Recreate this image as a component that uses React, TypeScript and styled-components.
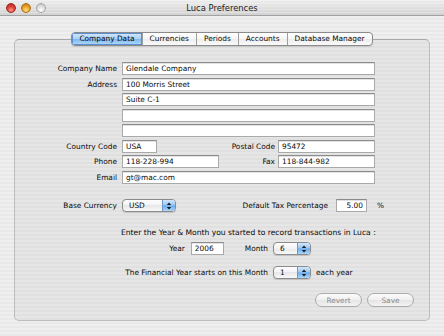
import * as React from 'react';
import styled, { createGlobalStyle } from 'styled-components';

const GlobalStyle = createGlobalStyle`
  html, body {
    margin: 0;
    padding: 0;
  }
  body {
    font-family: "DejaVu Sans", "Liberation Sans", sans-serif;
    background: #ededed;
  }
`;

const FS = '7.4px';

const Window = styled.div`
  width: 444px;
  height: 336px;
  display: flex;
  flex-direction: column;
  overflow: hidden;
  background: repeating-linear-gradient(to bottom, #efefef 0 2px, #e9e9e9 2px 4px);
`;

const TitleBar = styled.div`
  height: 15px;
  flex: none;
  display: grid;
  grid-template-columns: 1fr auto 1fr;
  align-items: center;
  border-bottom: 1px solid #a2a2a2;
  background: repeating-linear-gradient(to bottom, rgba(255,255,255,0.25) 0 1px, transparent 1px 3px),
    linear-gradient(#ededed, #d2d2d2);
`;

const Lights = styled.div`
  display: flex;
  gap: 5px;
  padding-left: 6px;
`;

const Light = styled.span<{ $kind: 'close' | 'min' | 'zoom' }>`
  width: 10px;
  height: 10px;
  border-radius: 50%;
  box-sizing: border-box;
  border: 1px solid
    ${(p) => (p.$kind === 'close' ? '#9b2a24' : p.$kind === 'min' ? '#a8701a' : '#a6a6a6')};
  background: ${(p) =>
    p.$kind === 'close'
      ? 'radial-gradient(circle at 50% 75%, #ff9a8a 0, #e2453c 45%, #a8231c 100%)'
      : p.$kind === 'min'
      ? 'radial-gradient(circle at 50% 75%, #ffe08a 0, #f0a42a 45%, #b8700c 100%)'
      : 'radial-gradient(circle at 50% 75%, #ffffff 0, #e2e2e2 45%, #bdbdbd 100%)'};
`;

const Title = styled.div`
  font-size: 8.4px;
  color: #1a1a1a;
  text-align: center;
`;

const Content = styled.div`
  flex: 1;
  padding: 16px 14px 0;
  display: flex;
  flex-direction: column;
`;

const TabRow = styled.div`
  display: flex;
  justify-content: center;
  margin-bottom: -7px;
  position: relative;
  z-index: 1;
`;

const TabBar = styled.div`
  display: flex;
  height: 14px;
  box-sizing: border-box;
  border: 1px solid #8a8a8a;
  border-radius: 4px;
  overflow: hidden;
  box-shadow: 0 1px 1px rgba(0, 0, 0, 0.12);
  background: linear-gradient(#ffffff, #f6f6f6 50%, #ececec 50%, #fafafa);
`;

const Tab = styled.div<{ $active?: boolean }>`
  padding: 0 7px;
  font-size: ${FS};
  line-height: 12px;
  color: #0a0a0a;
  white-space: nowrap;
  & + & {
    border-left: 1px solid #9d9d9d;
  }
  ${(p) =>
    p.$active &&
    `
    background: linear-gradient(#d6eafc, #a9d0f5 48%, #7fb7ee 52%, #b3dbfb);
    box-shadow: inset 0 0 0 1px #5b8fd0;
  `}
`;

const Panel = styled.div`
  border: 1px solid #bdbdbd;
  border-top-color: #a9a9a9;
  border-radius: 5px;
  background: rgba(0, 0, 0, 0.035);
  padding: 22px 15px 13px;
  display: flex;
  flex-direction: column;
`;

const FormGrid = styled.div`
  display: grid;
  grid-template-columns: 92px 97px 59px 97px 9px;
  grid-auto-rows: 13px;
  row-gap: 2.5px;
`;

const Label = styled.div<{ $col?: number; $pad?: number }>`
  grid-column: ${(p) => p.$col ?? 1};
  font-size: ${FS};
  color: #0a0a0a;
  text-align: right;
  padding-right: ${(p) => p.$pad ?? 5}px;
  white-space: nowrap;
  align-self: center;
`;

const Field = styled.div<{ $col?: string; $w?: number; $right?: boolean }>`
  grid-column: ${(p) => p.$col ?? '2 / 5'};
  ${(p) => (p.$w ? `width: ${p.$w}px;` : '')}
  height: 13px;
  box-sizing: border-box;
  border: 1px solid #a9a9a9;
  border-top-color: #8c8c8c;
  background: #fff;
  box-shadow: inset 0 1px 0 #e2e2e2;
  font-size: ${FS};
  color: #0a0a0a;
  padding: 0 3px;
  display: flex;
  align-items: center;
  justify-content: ${(p) => (p.$right ? 'flex-end' : 'flex-start')};
  white-space: nowrap;
`;

const CurrencyRow = styled.div`
  margin-top: 15.5px;
  height: 13px;
  width: 354px;
  display: flex;
  align-items: center;
`;

const RowLabel = styled.div<{ $w?: number }>`
  ${(p) => (p.$w ? `width: ${p.$w}px; text-align: right; padding-right: 5px; box-sizing: border-box;` : '')}
  font-size: ${FS};
  color: #0a0a0a;
  white-space: nowrap;
`;

const Spacer = styled.div`
  flex: 1;
`;

const Gap = styled.div<{ $w: number }>`
  width: ${(p) => p.$w}px;
  flex: none;
`;

const Popup = styled.div<{ $w: number }>`
  width: ${(p) => p.$w}px;
  height: 13px;
  box-sizing: border-box;
  border: 1px solid #8b8b8b;
  border-radius: 4px;
  display: flex;
  overflow: hidden;
  flex: none;
  background: linear-gradient(#fdfdfd, #f3f3f3 50%, #e7e7e7 50%, #f8f8f8);
  box-shadow: 0 1px 1px rgba(0, 0, 0, 0.15);
`;

const PopupText = styled.span`
  flex: 1;
  padding-left: 6px;
  font-size: ${FS};
  line-height: 11px;
  color: #0a0a0a;
`;

const PopupArrows = styled.div`
  width: 12px;
  border-left: 1px solid #6f97c8;
  background: linear-gradient(#d2e7fc, #96c5f2 48%, #6aaaeb 52%, #abd7fb);
  display: flex;
  align-items: center;
  justify-content: center;
`;

const PeriodGrid = styled.div`
  margin-left: 91px;
  margin-top: 15px;
  display: grid;
  grid-template-columns: 147px auto;
  column-gap: 5px;
  align-items: center;
`;

const Intro = styled.div`
  grid-column: 1 / -1;
  font-size: 7.6px;
  line-height: 11px;
  color: #0a0a0a;
  white-space: nowrap;
`;

const Cell = styled.div<{ $mt: number; $end?: boolean }>`
  margin-top: ${(p) => p.$mt}px;
  height: 13px;
  display: flex;
  align-items: center;
  justify-content: ${(p) => (p.$end ? 'flex-end' : 'flex-start')};
  font-size: ${FS};
  color: #0a0a0a;
  white-space: nowrap;
`;

const ButtonRow = styled.div`
  margin-top: 14px;
  display: flex;
  justify-content: flex-end;
  gap: 5px;
`;

const PushButton = styled.div`
  width: 47px;
  height: 14px;
  box-sizing: border-box;
  border: 1px solid #ababab;
  border-radius: 7px;
  background: linear-gradient(#fcfcfc, #efefef 50%, #e4e4e4 50%, #f3f3f3);
  color: #8c8c8c;
  font-size: ${FS};
  display: flex;
  align-items: center;
  justify-content: center;
`;

const Arrows = () => (
  <svg width="6" height="8" viewBox="0 0 6 8">
    <path d="M3 0.6 L5.2 3 L0.8 3 Z" fill="#1a1a1a" />
    <path d="M3 7.4 L5.2 5 L0.8 5 Z" fill="#1a1a1a" />
  </svg>
);

const PopupButton = ({ value, width }: { value: string; width: number }) => (
  <Popup $w={width}>
    <PopupText>{value}</PopupText>
    <PopupArrows>
      <Arrows />
    </PopupArrows>
  </Popup>
);

const tabs = ['Company Data', 'Currencies', 'Periods', 'Accounts', 'Database Manager'];

export default function App() {
  return (
    <>
      <GlobalStyle />
      <Window>
        <TitleBar>
          <Lights>
            <Light $kind="close" />
            <Light $kind="min" />
            <Light $kind="zoom" />
          </Lights>
          <Title>Luca Preferences</Title>
          <div />
        </TitleBar>
        <Content>
          <TabRow>
            <TabBar>
              {tabs.map((t, i) => (
                <Tab key={t} $active={i === 0}>
                  {t}
                </Tab>
              ))}
            </TabBar>
          </TabRow>
          <Panel>
            <FormGrid>
              <Label>Company Name</Label>
              <Field>Glendale Company</Field>
              <Label>Address</Label>
              <Field>100 Morris Street</Field>
              <Label />
              <Field>Suite C-1</Field>
              <Label />
              <Field />
              <Label />
              <Field />
              <Label>Country Code</Label>
              <Field $col="2" $w={35}>USA</Field>
              <Label $col={3} $pad={3}>Postal Code</Label>
              <Field $col="4">95472</Field>
              <Label>Phone</Label>
              <Field $col="2">118-228-994</Field>
              <Label $col={3} $pad={3}>Fax</Label>
              <Field $col="4">118-844-982</Field>
              <Label>Email</Label>
              <Field>gt@mac.com</Field>
            </FormGrid>

            <CurrencyRow>
              <RowLabel $w={92}>Base Currency</RowLabel>
              <PopupButton value="USD" width={54} />
              <Spacer />
              <RowLabel>Default Tax Percentage</RowLabel>
              <Gap $w={8} />
              <Field $w={31} $right>5.00</Field>
              <Gap $w={10} />
              <RowLabel>%</RowLabel>
            </CurrencyRow>

            <PeriodGrid>
              <Intro>Enter the Year &amp; Month you started to record transactions in Luca :</Intro>
              <Cell $mt={4} $end>
                Year
                <Gap $w={6} />
                <Field $w={33}>2006</Field>
                <Gap $w={21} />
                Month
              </Cell>
              <Cell $mt={4}>
                <PopupButton value="6" width={38} />
              </Cell>
              <Cell $mt={11} $end>The Financial Year starts on this Month</Cell>
              <Cell $mt={11}>
                <PopupButton value="1" width={38} />
                <Gap $w={5} />
                each year
              </Cell>
            </PeriodGrid>

            <ButtonRow>
              <PushButton>Revert</PushButton>
              <PushButton>Save</PushButton>
            </ButtonRow>
          </Panel>
        </Content>
      </Window>
    </>
  );
}
